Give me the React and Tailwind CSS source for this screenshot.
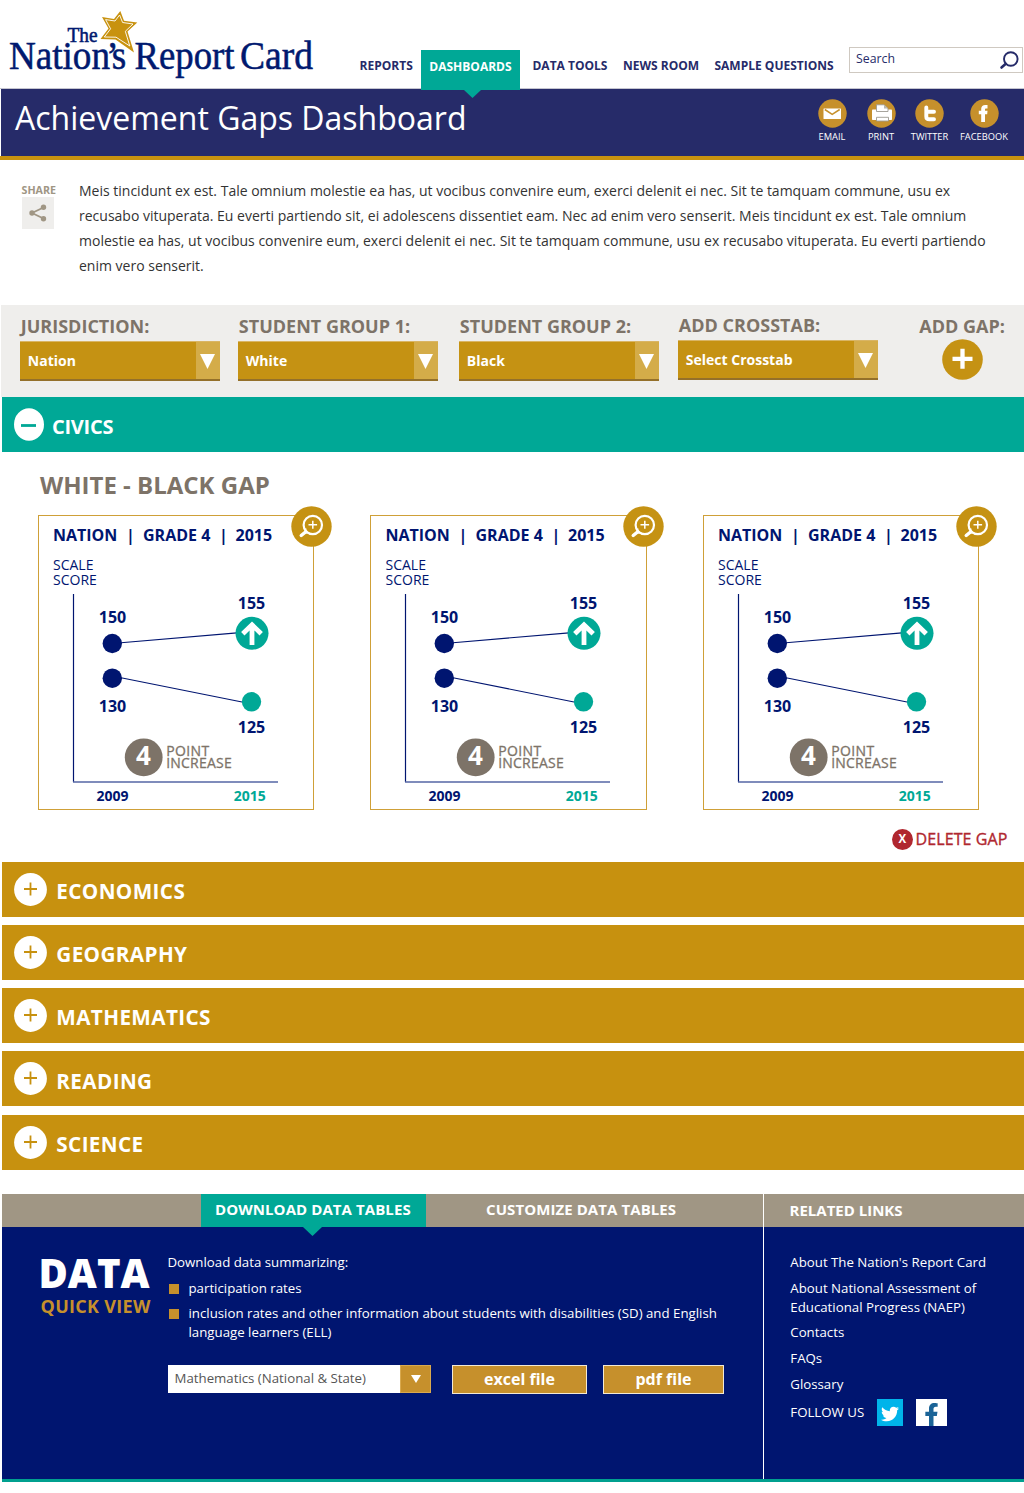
import React from "react";
import { FaFacebookF, FaTwitter } from "react-icons/fa";

function Logo() {
  return (
    <svg className="block h-[88px] w-[340px] shrink-0" viewBox="0 0 340 88">
      <g fill="#00196f" stroke="#00196f" strokeWidth="0.55" fontFamily="'Liberation Serif', serif" fontWeight="400">
        <text x="67.5" y="42" fontSize="20.5" textLength="30" lengthAdjust="spacingAndGlyphs">The</text>
        <text y="69" fontSize="41" transform="scale(0.905 1)">
          <tspan x="9.900">Nation</tspan>
          <tspan x="117.500">’</tspan>
          <tspan x="123.500">s</tspan>
        </text>
        <text x="134.5" y="69" fontSize="41" textLength="100" lengthAdjust="spacingAndGlyphs">Report</text>
        <text x="240" y="69" fontSize="41" textLength="73" lengthAdjust="spacingAndGlyphs">Card</text>
      </g>
      <polygon
        points="120.300,11 124,20.800 137.300,22.500 127.500,31.500 134,52.500 115.500,39.500 100.500,39 108.500,28.500 102,17 114,19"
        fill="#c8920f"
      />
      <polygon
        points="119.600,15 122.600,22.500 133,24 125.300,31.300 129.800,46 116,37.200 104.300,37 110.600,28.800 105.600,19.600 115,21"
        fill="none"
        stroke="#fff"
        strokeWidth="0.9"
      />
    </svg>
  );
}

function Header() {
  return (
    <header className="relative z-10 flex h-[89px] border-b border-[#c5c5d0] text-[12px] font-bold leading-4 text-[#262b69]">
      <Logo />
      <nav className="flex items-start">
        <a className="ml-[19.600px] mt-[57.500px] w-[61.400px]">REPORTS</a>
        <a className="relative mt-[50px] flex h-[40px] w-[99px] items-center justify-center bg-[#00a896] pb-[6px] text-white">
          DASHBOARDS
          <svg className="absolute left-[43px] top-[40px] h-[8px] w-[17px]" viewBox="0 0 17 8">
            <path d="M0 0H17L8.500 8Z" fill="#00a896" />
          </svg>
        </a>
        <a className="ml-[12.500px] mt-[57.500px] w-[90.500px]">DATA TOOLS</a>
        <a className="mt-[57.500px] w-[91.500px]">NEWS ROOM</a>
        <a className="mt-[57.500px] w-[134.500px] whitespace-nowrap">SAMPLE QUESTIONS</a>
      </nav>
      <div className="mt-[47px] flex h-[26px] w-[174px] justify-between border border-[#cfc9c1] pl-[6px] pr-[3px] font-normal">
        <span className="mt-[3px] text-[12.300px]">Search</span>
        <svg className="mt-[2.500px] h-[19px] w-[20px]" viewBox="0 0 20 19" fill="none" stroke="#262b69">
          <circle cx="11.800" cy="8" r="6.800" strokeWidth="1.900" />
          <path d="M6.800 12.800L2.500 16.500" strokeWidth="2.600" strokeLinecap="round" />
        </svg>
      </div>
    </header>
  );
}

function RoundAction({ label, width, children }) {
  return (
    <div className={`flex flex-col items-center ${width}`}>
      <svg className="h-[29px] w-[29px]" viewBox="0 0 29 29">
        <circle cx="14.500" cy="14.500" r="14.200" fill="#c6902c" />
        {children}
      </svg>
      <span className="mt-[3.500px] text-[9.300px] leading-[12px] text-white">{label}</span>
    </div>
  );
}

function TitleBar() {
  return (
    <div className="border-b-[4px] border-[#c8920f]">
      <div className="ml-px flex h-[67px] justify-between bg-[#262b69] pl-[14px] pr-[9.500px]">
        <h1 className="text-[32px] leading-[57px] text-white">Achievement Gaps Dashboard</h1>
        <div className="flex pt-[9.500px]">
          <RoundAction label="EMAIL" width="w-[49px]">
            <rect x="5.500" y="9.500" width="17.500" height="10.500" rx="0.500" fill="#fff" />
            <path d="M6.800 10.500L14.200 15.300L21.700 10.500" fill="none" stroke="#c6902c" strokeWidth="1.500" />
          </RoundAction>
          <RoundAction label="PRINT" width="w-[49px]">
            <rect x="5" y="10.500" width="20" height="10.500" rx="0.800" fill="#fff" />
            <path d="M9.500 5.800H17L21 9.500V12.500H9.500Z" fill="#fff" stroke="#9d9a92" strokeWidth="0.900" />
            <path d="M17 5.800V9.500H21Z" fill="#b9b6ae" />
            <path d="M9.500 18.300H21.500V22H9.500Z" fill="#fff" stroke="#9d9a92" strokeWidth="0.900" />
          </RoundAction>
          <RoundAction label="TWITTER" width="w-[48px]">
            <path
              d="M11.300 8.500V17.500Q11.300 20.300 14.300 20.300H19M11.300 12.800H19"
              fill="none"
              stroke="#fff"
              strokeWidth="3.900"
              strokeLinecap="round"
            />
          </RoundAction>
          <RoundAction label="FACEBOOK" width="w-[61px]">
            <path
              d="M11.200 23V15.300H8.800V11.700H11.200V9.800C11.200 7.200 12.800 5.900 15.200 5.900H17.500V9.400H16.100C15.300 9.400 15 9.800 15 10.500V11.700H17.500L17.200 15.300H15V23Z"
              fill="#fff"
            />
          </RoundAction>
        </div>
      </div>
    </div>
  );
}

function Intro() {
  return (
    <section className="flex h-[144.500px] pt-[18px]">
      <div className="w-[79px] pl-[21.500px] pt-[5px]">
        <div className="text-[10.700px] font-bold leading-[14px] text-[#a09684]">SHARE</div>
        <div className="flex h-[32px] w-[32px] items-center justify-center bg-[#efeeec]">
          <svg className="h-[18px] w-[18px]" viewBox="0 0 18 18" fill="#a09684" stroke="#a09684">
            <path d="M14.500 3.500L3 9L14.500 14.500" fill="none" strokeWidth="1.800" />
            <circle cx="3" cy="9" r="2.700" stroke="none" />
            <circle cx="14.500" cy="3.300" r="2.700" stroke="none" />
            <circle cx="14.500" cy="14.700" r="2.700" stroke="none" />
          </svg>
        </div>
      </div>
      <p className="whitespace-nowrap text-[14px] leading-[25px] text-[#333]">
        Meis tincidunt ex est. Tale omnium molestie ea has, ut vocibus convenire eum, exerci delenit ei nec. Sit te tamquam commune, usu ex
        <br />
        recusabo vituperata. Eu everti partiendo sit, ei adolescens dissentiet eam. Nec ad enim vero senserit. Meis tincidunt ex est. Tale omnium
        <br />
        molestie ea has, ut vocibus convenire eum, exerci delenit ei nec. Sit te tamquam commune, usu ex recusabo vituperata. Eu everti partiendo
        <br />
        enim vero senserit.
      </p>
    </section>
  );
}

function Filter({ label, value, className }) {
  return (
    <div className={`w-[200px] ${className}`}>
      <div className="whitespace-nowrap pl-[0.500px] text-[18px] font-bold leading-[24px] text-[#7d7368]">{label}</div>
      <div className="mt-[3px] flex h-[40px] items-stretch justify-between border-b-2 border-t border-b-[#94702a] border-t-[#d9b565] bg-[#c59213] pl-[7.500px] text-[14px] font-bold text-white">
        <span className="leading-[37px]">{value}</span>
        <span className="flex w-[24px] justify-center bg-[#d4ac49] pr-px pt-[12px]">
          <svg className="h-[15px] w-[15px]" viewBox="0 0 15 15">
            <path d="M0 0H15L7.500 15Z" fill="#fff" />
          </svg>
        </span>
      </div>
    </div>
  );
}

function Filters() {
  return (
    <section className="ml-px flex h-[92.500px] bg-[#efeeec] pt-[9.500px]">
      <Filter label="JURISDICTION:" value="Nation" className="ml-[19.300px]" />
      <Filter label="STUDENT GROUP 1:" value="White" className="ml-[18px]" />
      <Filter label="STUDENT GROUP 2:" value="Black" className="ml-[21px]" />
      <Filter label="ADD CROSSTAB:" value="Select Crosstab" className="-mt-[1px] ml-[19px]" />
      <div className="-mt-[0.500px] ml-[41px] flex flex-col items-center">
        <div className="whitespace-nowrap text-[18px] font-bold leading-[24px] text-[#7d7368]">ADD GAP:</div>
        <svg className="mt-px h-[41px] w-[41px]" viewBox="0 0 41 41">
          <circle cx="20.500" cy="20.500" r="20.300" fill="#c59213" />
          <path d="M10.500 19.800H30.500M20.500 9.800V29.800" stroke="#fff" strokeWidth="4.300" />
        </svg>
      </div>
    </section>
  );
}

function Magnifier() {
  return (
    <svg className="absolute -top-[10px] left-[252px] h-[41px] w-[41px]" viewBox="0 0 41 41">
      <circle cx="20.500" cy="20.500" r="20.200" fill="#c59213" />
      <g fill="none" stroke="#fff">
        <circle cx="21.800" cy="19" r="9.200" strokeWidth="2.200" />
        <path d="M21.800 14.700V22.700M17.500 18.700H26.100" strokeWidth="1.500" />
        <path d="M14.800 25.700L10.200 29.500" strokeWidth="3.400" strokeLinecap="round" />
        <path d="M15 22.500L13.500 27L18.500 26.800" strokeWidth="1.400" />
      </g>
    </svg>
  );
}

function GapChart() {
  return (
    <svg className="block h-[222px] w-[275px]" viewBox="1 1 275 222" fontFamily="'Open Sans', sans-serif">
      <path d="M35.500 6V194" stroke="#001570" strokeWidth="1.200" />
      <path d="M35 194H240" stroke="#5566a5" strokeWidth="1.500" />
      <g stroke="#001570" strokeWidth="1.100">
        <path d="M83 54.700L199 44.900" />
        <path d="M83 89.700L204 114" />
      </g>
      <g fill="#001570">
        <circle cx="74.300" cy="55.500" r="9.700" />
        <circle cx="74.300" cy="90.200" r="9.700" />
      </g>
      <circle cx="213.500" cy="113.800" r="9.700" fill="#00a896" />
      <circle cx="214" cy="45.300" r="16.500" fill="#00a896" />
      <path d="M214 57V37.500M204.800 45.800L214 36.800L223.200 45.800" fill="none" stroke="#fff" strokeWidth="4.800" />
      <g fill="#001570" fontSize="16" fontWeight="700" textAnchor="middle">
        <text x="74.500" y="35">150</text>
        <text x="213.500" y="21">155</text>
        <text x="74.500" y="124.300">130</text>
        <text x="213.500" y="145.300">125</text>
      </g>
      <circle cx="105.700" cy="169.300" r="18.900" fill="#7d7368" />
      <text x="105.500" y="176.500" fill="#fff" fontSize="26" fontWeight="700" textAnchor="middle">4</text>
      <g fill="#7d7368" stroke="#7d7368" strokeWidth="0.300" fontSize="14">
        <text x="128.200" y="167.700" textLength="43">POINT</text>
        <text x="128.200" y="179.500" textLength="65.500">INCREASE</text>
      </g>
      <g fontSize="14" fontWeight="700" textAnchor="middle">
        <text x="74.400" y="212.500" fill="#001570">2009</text>
        <text x="211.700" y="212.500" fill="#00a896">2015</text>
      </g>
    </svg>
  );
}

function GapCard() {
  return (
    <article className="relative h-[295px] w-[276.500px] border border-[#cfa038] text-[#001570]">
      <Magnifier />
      <div className="flex whitespace-nowrap pl-[14.500px] pt-[8px] text-[16px] font-bold leading-[22px]">
        <span className="w-[73px]">NATION</span>
        <span className="w-[17px]">|</span>
        <span className="w-[76px]">GRADE 4</span>
        <span className="w-[16.500px]">|</span>
        <span>2015</span>
      </div>
      <div className="pb-[1.600px] pl-[14.500px] pt-[11.500px] text-[14px] leading-[15px]">
        SCALE
        <br />
        SCORE
      </div>
      <GapChart />
    </article>
  );
}

function Civics() {
  return (
    <section className="h-[464.500px]">
      <div className="ml-[1.500px] flex h-[55px] items-center bg-[#00a896] pl-[12.500px]">
        <svg className="h-[33px] w-[30px]" viewBox="0 0 30 33">
          <ellipse cx="15" cy="16.500" rx="15" ry="16.300" fill="#fff" />
          <path d="M7 17.500H22" stroke="#00a896" strokeWidth="2.800" />
        </svg>
        <h2 className="ml-[8px] mt-[4px] text-[20px] font-bold leading-[26px] tracking-[-0.250px] text-white">CIVICS</h2>
      </div>
      <h3 className="ml-[40px] mt-[16.400px] text-[24px] font-bold leading-[33px] text-[#7d7368]">WHITE - BLACK GAP</h3>
      <div className="ml-[37.500px] mt-[13.600px] flex gap-[56px]">
        <GapCard />
        <GapCard />
        <GapCard />
      </div>
      <div className="mr-[16.500px] mt-[18px] flex items-center justify-end text-[#b0272f]">
        <span className="mt-[1px] flex h-[20.500px] w-[20.500px] items-center justify-center rounded-full bg-[#b0272f] pb-[1px] text-[11.500px] font-bold text-white">X</span>
        <span className="ml-[3px] text-[16px] leading-[22px] tracking-[0.100px] [-webkit-text-stroke:0.35px_#b0272f]">DELETE GAP</span>
      </div>
    </section>
  );
}

const SUBJECTS = ["ECONOMICS", "GEOGRAPHY", "MATHEMATICS", "READING", "SCIENCE"];

function Subjects() {
  return (
    <section className="ml-[1.500px] flex h-[332px] flex-col gap-[8.300px]">
      {SUBJECTS.map((name) => (
        <div key={name} className="flex h-[55px] shrink-0 items-center bg-[#c7910f] pl-[12.500px]">
          <svg className="h-[33px] w-[33px]" viewBox="0 0 33 33">
            <circle cx="16.500" cy="16.500" r="16.400" fill="#fff" />
            <path d="M10 16H23M16.500 9.500V22.500" stroke="#c7910f" strokeWidth="1.800" />
          </svg>
          <h2 className="ml-[9.300px] mt-[3.700px] text-[20.700px] font-bold leading-[26px] tracking-[0.380px] text-white">{name}</h2>
        </div>
      ))}
    </section>
  );
}

function Bullet({ children }) {
  return (
    <li className="flex items-start">
      <span className="ml-px mr-[10px] mt-[5px] h-[10px] w-[10px] shrink-0 bg-[#c6902c]" />
      <span>{children}</span>
    </li>
  );
}

function DataPanel() {
  return (
    <div className="flex w-[761px] flex-col">
      <div className="flex h-[33px] bg-[#a09684] text-[15px] font-bold leading-[31px] text-white">
        <div className="relative ml-[198.500px] w-[225.500px] bg-[#00a896] pl-[14.500px] tracking-[0.080px]">
          DOWNLOAD DATA TABLES
          <svg className="absolute left-[102px] top-[33px] h-[9px] w-[19px]" viewBox="0 0 19 9">
            <path d="M0 0H19L9.500 9Z" fill="#00a896" />
          </svg>
        </div>
        <div className="ml-[60px] tracking-[0.080px]">CUSTOMIZE DATA TABLES</div>
      </div>
      <div className="flex text-white">
        <div className="w-[165.500px] pl-[36.500px] pt-[21px]">
          <div className="text-[40px] font-extrabold leading-[50px]">DATA</div>
          <div className="-mt-[4px] ml-[2px] text-[18px] font-bold leading-[24px] tracking-[0.300px] text-[#c6902c]">QUICK VIEW</div>
        </div>
        <div className="whitespace-nowrap pt-[26px] text-[13.250px] leading-[19px]">
          <p>Download data summarizing:</p>
          <ul className="mt-[7px] flex flex-col gap-[6px]">
            <Bullet>participation rates</Bullet>
            <Bullet>
              inclusion rates and other information about students with disabilities (SD) and English
              <br />
              language learners (ELL)
            </Bullet>
          </ul>
          <div className="mt-[23px] flex">
            <div className="flex h-[28px] w-[263.500px] items-stretch justify-between bg-white pl-[7px] leading-[27px] text-[#555]">
              Mathematics (National &amp; State)
              <span className="flex w-[31px] items-center justify-center border border-[#d9a94e] bg-[#c6902c]">
                <svg className="h-[8px] w-[10px]" viewBox="0 0 10 8">
                  <path d="M0 0H10L5 8Z" fill="#fff" />
                </svg>
              </span>
            </div>
            <button className="ml-[21px] h-[29px] w-[135px] border border-[#f3e9d5] bg-[#c6902c] text-[16px] font-bold leading-[26px]">excel file</button>
            <button className="ml-[16px] h-[29px] w-[121px] border border-[#f3e9d5] bg-[#c6902c] text-[16px] font-bold leading-[26px]">pdf file</button>
          </div>
        </div>
      </div>
    </div>
  );
}

function RelatedLinks() {
  return (
    <div className="flex-1 border-l-[1.500px] border-white text-white">
      <h2 className="h-[33px] bg-[#a09684] pl-[25.500px] text-[15px] font-bold leading-[33px]">RELATED LINKS</h2>
      <div className="flex flex-col gap-[6.700px] whitespace-nowrap pl-[26.300px] pt-[26.400px] text-[13.250px] leading-[19px]">
        <a>About The Nation's Report Card</a>
        <a>
          About National Assessment of
          <br />
          Educational Progress (NAEP)
        </a>
        <a>Contacts</a>
        <a>FAQs</a>
        <a>Glossary</a>
        <div className="-mt-[1px] flex items-center">
          <span className="w-[86.500px]">FOLLOW US</span>
          <span className="flex h-[27px] w-[26px] items-center justify-center bg-[#00b4ea] pt-[3px]">
            <FaTwitter className="h-[18px] w-[18px]" />
          </span>
          <span className="ml-[13px] flex h-[27px] w-[31px] items-end justify-center bg-white text-[#1b6497]">
            <FaFacebookF className="h-[23px] w-[15px]" />
          </span>
        </div>
      </div>
    </div>
  );
}

export default function App() {
  return (
    <div className="h-[1493px] w-[1024px] overflow-hidden bg-white font-['Open_Sans',sans-serif]">
      <Header />
      <TitleBar />
      <Intro />
      <Filters />
      <Civics />
      <Subjects />
      <footer className="ml-[2px] flex h-[288px] border-b-[3.500px] border-[#00a08f] bg-[#001570]">
        <DataPanel />
        <RelatedLinks />
      </footer>
    </div>
  );
}
